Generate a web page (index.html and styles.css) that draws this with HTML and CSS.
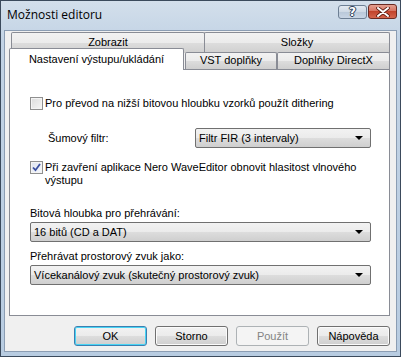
FILE: index.html
```html
<!DOCTYPE html>
<html lang="cs">
<head>
<meta charset="utf-8">
<title>Možnosti editoru</title>
<link rel="stylesheet" href="styles.css">
</head>
<body>
<div class="window">
  <div class="titlebar">
    <span class="title">Možnosti editoru</span>
    <div class="caption-buttons">
      <span class="cap-btn help">?</span>
      <span class="cap-btn close">
        <svg width="14" height="10" viewBox="0 0 14 10"><path d="M2 1 L12 9 M12 1 L2 9" stroke="#5a1a10" stroke-width="3.6" stroke-linecap="round"/><path d="M2 1 L12 9 M12 1 L2 9" stroke="#fff" stroke-width="2" stroke-linecap="round"/></svg>
      </span>
    </div>
  </div>
  <div class="client">
    <div class="tabs">
      <div class="tab-row back">
        <div class="tab wide">Zobrazit</div>
        <div class="tab wide2">Složky</div>
      </div>
      <div class="tab-row front">
        <div class="tab selected">Nastavení výstupu/ukládání</div>
        <div class="tab vst">VST doplňky</div>
        <div class="tab dx">Doplňky DirectX</div>
      </div>
    </div>
    <div class="panel">
      <div class="check-row first">
        <span class="checkbox"></span>
        <span class="check-label">Pro převod na nižší bitovou hloubku vzorků použít dithering</span>
      </div>
      <div class="filter-row">
        <span class="filter-label">Šumový filtr:</span>
        <div class="combo short"><span>Filtr FIR (3 intervaly)</span><span class="arrow"></span></div>
      </div>
      <div class="check-row second">
        <span class="checkbox checked">
          <svg width="9" height="9" viewBox="0 0 9 9"><path d="M1 4.5 L3.5 7.2 L8 1" fill="none" stroke="#3a4fa0" stroke-width="1.8"/></svg>
        </span>
        <span class="check-label">Při zavření aplikace Nero WaveEditor obnovit hlasitost vlnového<br>výstupu</span>
      </div>
      <div class="label l1">Bitová hloubka pro přehrávání:</div>
      <div class="combo full"><span>16 bitů (CD a DAT)</span><span class="arrow"></span></div>
      <div class="label l2">Přehrávat prostorový zvuk jako:</div>
      <div class="combo full"><span>Vícekanálový zvuk (skutečný prostorový zvuk)</span><span class="arrow"></span></div>
    </div>
    <div class="buttons">
      <span class="btn default">OK</span>
      <span class="btn">Storno</span>
      <span class="btn disabled">Použít</span>
      <span class="btn">Nápověda</span>
    </div>
  </div>
</div>
</body>
</html>
```
FILE: styles.css
```css
* { box-sizing: border-box; }
html, body { margin: 0; padding: 0; }
body {
  width: 401px;
  height: 357px;
  overflow: hidden;
  font-family: "Liberation Sans", Arial, sans-serif;
  font-size: 11px;
  color: #000;
}
.window {
  width: 401px;
  height: 357px;
  border: 1px solid #3b4a5c;
  background: linear-gradient(#d3dfeb, #c2d3e5 40px, #b8cce1);
  display: flex;
  flex-direction: column;
  padding: 0 3px 4px 3px;
}
.titlebar {
  height: 29px;
  display: flex;
  align-items: flex-start;
  justify-content: space-between;
  padding: 0 0 0 3px;
}
.title {
  font-family: "Open Sans", "Noto Sans", sans-serif;
  font-size: 12px;
  margin-top: 5px;
  color: #000;
}
.caption-buttons {
  display: flex;
  gap: 1px;
  margin-top: 4px;
}
.cap-btn {
  width: 29px;
  height: 14px;
  border: 1px solid #6d7f94;
  border-radius: 3px;
  display: flex;
  align-items: center;
  justify-content: center;
}
.help {
  background: linear-gradient(#e3eaf2, #cdd8e4 50%, #b9c8d9 50%, #c8d5e4);
  color: #fff;
  font-weight: bold;
  font-size: 12px;
  font-family: "DejaVu Sans", sans-serif;
  text-shadow: 0 0 1px #2c3e58, 1px 0 0 #2c3e58, -1px 0 0 #2c3e58, 0 1px 0 #2c3e58, 0 -1px 0 #2c3e58;
  line-height: 1;
}
.close {
  height: 15px;
  margin-top: -1px;
  background: linear-gradient(#e4a091, #d66f5c 50%, #c2432b 50%, #d4654d);
  border-color: #6a2a22;
}
.client {
  flex: 1;
  background: #f0f0f0;
  border: 1px solid #8b9db3;
  display: flex;
  flex-direction: column;
  padding: 1px 6px 0 4px;
}
.tabs {
  display: flex;
  flex-direction: column;
  position: relative;
  z-index: 1;
}
.tab-row { display: flex; }
.tab-row.back { padding-left: 2px; }
.tab {
  border: 1px solid #898c95;
  border-bottom: none;
  border-radius: 2px 2px 0 0;
  background: linear-gradient(#f2f2f2, #ebebeb 50%, #dddddd 50%, #cfcfcf);
  text-align: center;
  white-space: nowrap;
}
.back .tab { height: 21px; padding-top: 3px; }
.tab.wide { width: 194px; }
.tab.wide2 { width: 186px; margin-left: -1px; }
.front { margin-top: -5px; align-items: flex-end; }
.front .tab { height: 17px; padding-top: 1px; }
.tab.selected {
  width: 175px;
  height: 22px;
  padding-top: 4px;
  background: #fff;
  margin-bottom: -1px;
  position: relative;
  z-index: 2;
}
.tab.vst { width: 92px; margin-left: 1px; }
.tab.dx { width: 113px; }
.panel {
  height: 247px;
  background: #fff;
  border: 1px solid #898c95;
  display: flex;
  flex-direction: column;
  padding: 0 18px 0 20px;
}
.check-row { display: flex; align-items: flex-start; line-height: 13px; }
.check-row.first { margin-top: 27px; }
.check-row.second { margin-top: 13px; }
.checkbox {
  width: 13px;
  height: 13px;
  border: 1px solid #8f8f8f;
  background: linear-gradient(135deg, #dcdcdc, #f6f6f6);
  box-shadow: inset 0 0 0 1px #f4f4f4;
  flex: none;
  margin-right: 2px;
  display: flex;
  align-items: center;
  justify-content: center;
}
.checkbox.checked { background: linear-gradient(135deg, #dde3ef, #f6f8fc); }
.check-label { white-space: nowrap; }
.filter-row {
  display: flex;
  align-items: center;
  margin-top: 18px;
}
.filter-label { width: 165px; flex: none; padding-left: 18px; }
.combo {
  height: 20px;
  border: 1px solid #707070;
  border-radius: 2px;
  background: linear-gradient(#f2f2f2, #ebebeb 50%, #dddddd 50%, #cfcfcf);
  display: flex;
  align-items: center;
  justify-content: space-between;
  padding: 0 7px 0 3px;
  white-space: nowrap;
}
.combo.short { width: 176px; }
.combo.full { width: 341px; }
.arrow {
  width: 0;
  height: 0;
  border-left: 4px solid transparent;
  border-right: 4px solid transparent;
  border-top: 4px solid #000;
}
.label { line-height: 13px; }
.label.l1 { margin-top: 20px; margin-bottom: 2px; }
.label.l2 { margin-top: 8px; margin-bottom: 2px; }
.buttons {
  display: flex;
  justify-content: flex-end;
  gap: 8px;
  margin-top: 10px;
}
.btn {
  width: 73px;
  height: 20px;
  border: 1px solid #707070;
  border-radius: 3px;
  background: linear-gradient(#f2f2f2, #ebebeb 50%, #dddddd 50%, #cfcfcf);
  box-shadow: inset 0 0 0 1px #fbfbfb;
  display: flex;
  align-items: center;
  justify-content: center;
}
.btn.default {
  border-color: #3c7fb1;
  box-shadow: inset 0 0 0 1px #48d4f4;
}
.btn.disabled {
  border-color: #adb2b5;
  background: #f4f4f4;
  color: #838383;
  box-shadow: none;
}
```
